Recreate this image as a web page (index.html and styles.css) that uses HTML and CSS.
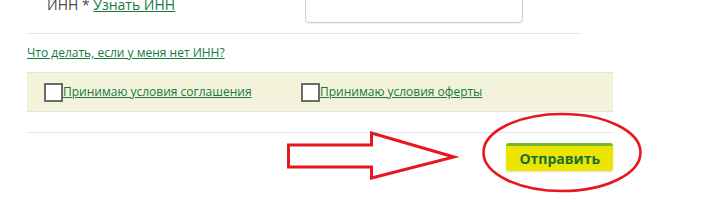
FILE: index.html
```html
<!DOCTYPE html>
<html lang="ru">
<head>
    <meta charset="UTF-8">
    <meta name="viewport" content="width=device-width, initial-scale=1.0">
    <title>Анкета</title>
    <link rel="stylesheet" href="styles.css">
</head>
<body>
    <main class="formulario">

        <div class="campo">
            <label class="rotulo" for="inn">ИНН * <a href="#" class="link">Узнать ИНН</a></label>
            <input type="text" id="inn" class="caixa">
        </div>

        <p class="ajuda"><a href="#" class="link">Что делать, если у меня нет ИНН?</a></p>

        <div class="termos">
            <label class="termo"><span class="check"></span><a href="#" class="link">Принимаю условия соглашения</a></label>
            <label class="termo"><span class="check"></span><a href="#" class="link">Принимаю условия оферты</a></label>
        </div>

        <div class="rodape">
            <button type="submit" class="enviar">Отправить</button>
        </div>

    </main>

    <!-- marcação vermelha por cima da tela -->
    <svg class="marcas" width="717" height="202" viewBox="0 0 717 202">
        <polygon points="288.5,145 371.5,145 371.5,133 454,157 371.5,178 371.5,167 288.5,167"
                 fill="none" stroke="#e8171f" stroke-width="3"/>
        <ellipse cx="562" cy="152.5" rx="78.5" ry="38.5"
                 fill="none" stroke="#e8171f" stroke-width="2.6"/>
    </svg>
</body>
</html>
```

FILE: styles.css
```css
*, *::before, *::after
{
    box-sizing: border-box;
    margin: 0;
    padding: 0;
}
html, body
{
    width: 717px;
    height: 202px;
    overflow: hidden;
}
body
{
    background: #fff;
    font-family: "Open Sans", "Noto Sans", sans-serif;
    color: #4a4a4a;
    position: relative;
}
.formulario
{
    width: 613px;
    padding-left: 27px;
}
.link
{
    color: #137a3c;
    text-decoration: underline;
}
.campo
{
    width: 554px;
    margin-top: -13px;
    padding-bottom: 10px;
    border-bottom: 1px solid #e4e4e4;
    display: grid;
    grid-template-columns: 258px 218px;
    padding-left: 20px;
}
.rotulo
{
    font-size: 14px;
    line-height: 20px;
    margin-top: 8px;
}
.caixa
{
    height: 36px;
    border: 1px solid #cfcfcf;
    border-radius: 4px;
    box-shadow: 0 1px 1px rgba(0, 0, 0, 0.06);
    outline: none;
}
.ajuda
{
    font-size: 12px;
    line-height: 18px;
    margin-top: 10px;
}
.termos
{
    margin-top: 10px;
    height: 40px;
    background-color: #f3f3dc;
    border-top: 1px solid #e2e2e2;
    border-bottom: 1px solid #e2e2e2;
    display: grid;
    grid-template-columns: 257px auto;
    align-items: center;
    padding-left: 17px;
}
.termo
{
    display: flex;
    align-items: center;
    font-size: 12px;
    line-height: 18px;
}
.check
{
    width: 19px;
    height: 19px;
    border: 2px solid #6b6b6b;
    background: #fff;
}
.rodape
{
    margin-top: 20px;
    border-top: 1px solid #e4e4e4;
    padding-top: 10px;
    display: flex;
    justify-content: flex-end;
}
.enviar
{
    height: 28px;
    padding: 0 13px;
    background-color: #ebe500;
    border: none;
    border-top: 3px solid #77b72b;
    border-radius: 3px;
    box-shadow: 0 1px 2px rgba(0, 0, 0, 0.15);
    color: #176f36;
    font-family: "Open Sans", "Noto Sans", sans-serif;
    font-size: 14px;
    font-weight: bold;
    line-height: 22px;
}
.marcas
{
    position: absolute;
    left: 0;
    top: 0;
}
```
